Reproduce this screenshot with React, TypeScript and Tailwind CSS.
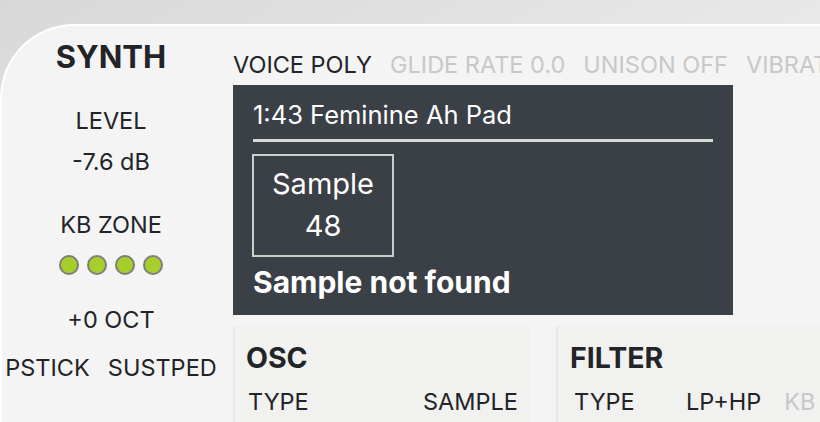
import React from 'react'

// Synth voice editor header

const font = { fontFamily: 'Inter, "Noto Sans", sans-serif' }

function Dot() {
  return <div className="w-[20px] h-[20px] rounded-full bg-[#a6cf2c] border-2 border-[#7d7d7d]" />
}

export default function App() {
  return (
    <div
      className="w-[820px] h-[422px] overflow-hidden bg-gradient-to-br from-[#d8d8d8] via-[#e8e8e8] to-[#ededed] text-[#222428]"
      style={font}
    >
      <div className="mt-[24px] h-[398px] rounded-tl-[74px] border-t-2 border-l-2 border-white bg-[#f4f4f4] flex">
        {/* Left column */}
        <div className="w-[218px] shrink-0 flex flex-col items-center">
          <div className="mt-[15px] text-[31px] leading-none font-bold">SYNTH</div>
          <div className="mt-[37px] text-[23.5px] leading-none">LEVEL</div>
          <div className="mt-[17.5px] text-[23.5px] leading-none">-7.6 dB</div>
          <div className="mt-[39.5px] text-[23.5px] leading-none">KB ZONE</div>
          <div className="mt-[18.7px] flex gap-[8px]">
            <Dot />
            <Dot />
            <Dot />
            <Dot />
          </div>
          <div className="mt-[32.8px] text-[23.5px] leading-none">+0 OCT</div>
          <div className="mt-[24.5px] text-[23.5px] leading-none flex gap-[18px] whitespace-nowrap">
            <span>PSTICK</span>
            <span>SUSTPED</span>
          </div>
        </div>

        {/* Right column */}
        <div className="ml-[13px] flex-1 min-w-0 flex flex-col">
          <div className="mt-[26.8px] text-[23.5px] leading-none flex gap-[18px] whitespace-nowrap">
            <span>VOICE POLY</span>
            <span className="text-[#c8c8c8]">GLIDE RATE 0.0</span>
            <span className="text-[#c8c8c8]">UNISON OFF</span>
            <span className="text-[#c8c8c8]">VIBRATO</span>
          </div>

          <div className="mt-[8.7px] w-[500px] h-[230px] shrink-0 bg-[#3b3f46] pl-[20px] pt-[17.5px] text-white flex flex-col">
            <div className="text-[25.5px] leading-none">1:43 Feminine Ah Pad</div>
            <div className="mt-[11px] w-[460px] h-[3px] bg-[#d5dad5]" />
            <div className="mt-[12px] -ml-[1px] w-[142px] h-[103px] border-2 border-[#c9cfc9] flex flex-col items-center pt-[13px]">
              <div className="text-[29px] leading-none">Sample</div>
              <div className="mt-[13px] text-[29px] leading-none">48</div>
            </div>
            <div className="mt-[10px] text-[30px] leading-none font-bold">Sample not found</div>
          </div>

          <div className="mt-[11px] flex flex-1">
            <div className="w-[297px] bg-[#f1f1ef] border-l-2 border-[#e8e8e8] pl-[11px] pr-[12px] pt-[18px]">
              <div className="text-[28.5px] leading-none font-bold">OSC</div>
              <div className="mt-[17.3px] text-[23.5px] leading-none flex justify-between pl-[2px]">
                <span>TYPE</span>
                <span>SAMPLE</span>
              </div>
            </div>
            <div className="ml-[26px] flex-1 bg-[#f1f1ef] border-l-2 border-[#e8e8e8] pl-[12px] pt-[18px]">
              <div className="text-[28.5px] leading-none font-bold">FILTER</div>
              <div className="mt-[17.3px] text-[23.5px] leading-none flex whitespace-nowrap pl-[4px]">
                <span className="w-[112px]">TYPE</span>
                <span>LP+HP</span>
                <span className="ml-[23px] text-[#c8c8c8]">KB</span>
              </div>
            </div>
          </div>
        </div>
      </div>
    </div>
  )
}
